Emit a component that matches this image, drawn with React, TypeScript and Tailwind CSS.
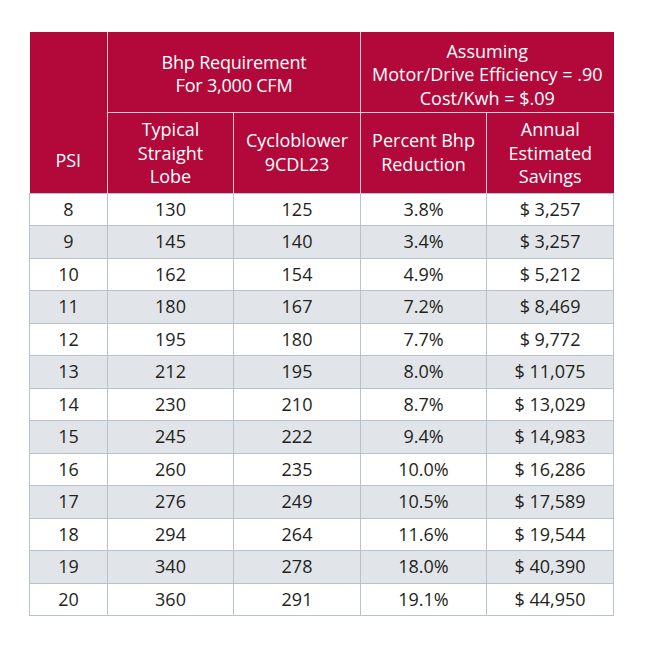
import React from "react";

const rows: [string, string, string, string, string][] = [
  ["8", "130", "125", "3.8%", "$ 3,257"],
  ["9", "145", "140", "3.4%", "$ 3,257"],
  ["10", "162", "154", "4.9%", "$ 5,212"],
  ["11", "180", "167", "7.2%", "$ 8,469"],
  ["12", "195", "180", "7.7%", "$ 9,772"],
  ["13", "212", "195", "8.0%", "$ 11,075"],
  ["14", "230", "210", "8.7%", "$ 13,029"],
  ["15", "245", "222", "9.4%", "$ 14,983"],
  ["16", "260", "235", "10.0%", "$ 16,286"],
  ["17", "276", "249", "10.5%", "$ 17,589"],
  ["18", "294", "264", "11.6%", "$ 19,544"],
  ["19", "340", "278", "18.0%", "$ 40,390"],
  ["20", "360", "291", "19.1%", "$ 44,950"],
];

export default function App() {
  return (
    <div
      className="w-[650px] h-[650px] bg-white pt-[32px] pl-[29px]"
      style={{ fontFamily: '"Open Sans", "Noto Sans", sans-serif' }}
    >
      <table className="border-collapse table-fixed w-[584px] text-[18px] leading-[23.5px]">
        <colgroup>
          <col className="w-[78px]" />
          <col className="w-[126px]" />
          <col className="w-[127px]" />
          <col className="w-[126px]" />
          <col className="w-[127px]" />
        </colgroup>
        <thead>
          <tr className="h-[80px]">
            <th
              rowSpan={2}
              className="bg-[#b3093a] text-white font-normal align-bottom pb-[20px] border-r-[1.5px] border-r-[#f0c6d0]"
            >
              PSI
            </th>
            <th
              colSpan={2}
              className="bg-[#b3093a] text-white font-normal tracking-[-0.2px] border-[1.5px] border-t-0 border-l-[#f0c6d0] border-r-[#f0c6d0] border-b-[#f0c6d0] pt-[5px]"
            >
              Bhp Requirement
              <br />
              For 3,000 CFM
            </th>
            <th
              colSpan={2}
              className="bg-[#b3093a] text-white font-normal border-b-[1.5px] border-b-[#f0c6d0] border-l-[1.5px] border-l-[#f0c6d0] pt-[6px]"
            >
              Assuming
              <br />
              Motor/Drive Efficiency = .90
              <br />
              Cost/Kwh = $.09
            </th>
          </tr>
          <tr className="h-[81px]">
            <th className="bg-[#b3093a] text-white font-normal border-r-[1.5px] border-r-[#f0c6d0] border-l-[1.5px] border-l-[#f0c6d0] pt-[2px]">
              Typical
              <br />
              Straight
              <br />
              Lobe
            </th>
            <th className="bg-[#b3093a] text-white font-normal border-r-[1.5px] border-r-[#f0c6d0]">
              Cycloblower
              <br />
              9CDL23
            </th>
            <th className="bg-[#b3093a] text-white font-normal border-r-[1.5px] border-r-[#f0c6d0]">
              Percent Bhp
              <br />
              Reduction
            </th>
            <th className="bg-[#b3093a] text-white font-normal pt-[2px]">
              Annual
              <br />
              Estimated
              <br />
              Savings
            </th>
          </tr>
        </thead>
        <tbody className="text-[#231f20]">
          {rows.map((r, i) => (
            <tr
              key={i}
              className={`h-[32.5px] ${i % 2 === 1 ? "bg-[#e1e5e9]" : "bg-white"}`}
            >
              {r.map((c, j) => (
                <td
                  key={j}
                  className="border border-[#b8c2cb] text-center p-0"
                >
                  {c}
                </td>
              ))}
            </tr>
          ))}
        </tbody>
      </table>
    </div>
  );
}
